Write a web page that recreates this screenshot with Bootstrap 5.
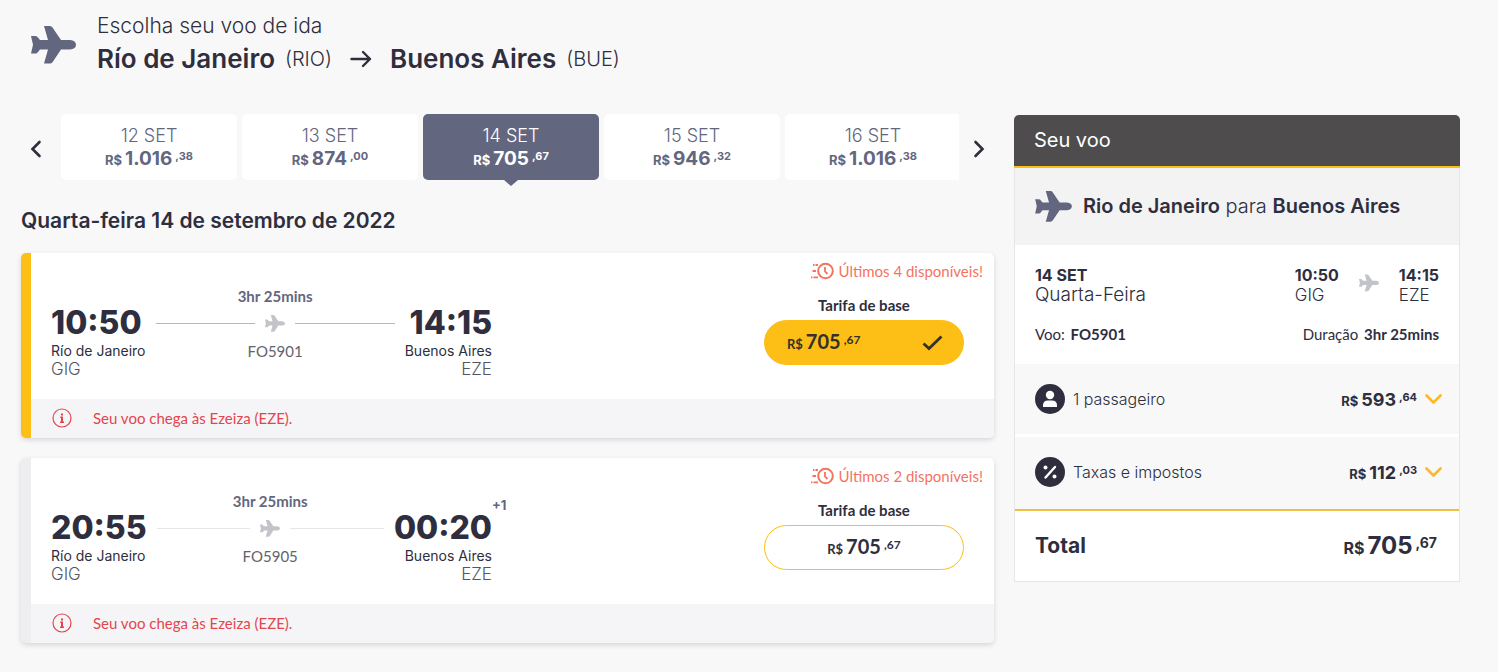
<!DOCTYPE html>
<html lang="pt-BR">
<head>
<meta charset="utf-8">
<meta name="viewport" content="width=device-width, initial-scale=1">
<title>Escolha seu voo de ida</title>
<link href="https://cdn.jsdelivr.net/npm/bootstrap@5.3.0/dist/css/bootstrap.min.css" rel="stylesheet">
<style>
:root { --ink: #2e2e3e; --slate: #63667f; --gold: #fdbe15; --alert: #e4454c; --coral: #f4735f; }
body { background: #f8f8f8; color: var(--ink); font-family: Inter, "Open Sans", sans-serif; }
.page { padding: 14px 38px 28px 21px; }
.lato { font-family: Lato, sans-serif; font-size: 15px; line-height: 20px; }
.light { font-weight: 300; }
.semi { font-weight: 600; }

.top-bar { padding-left: 10px; gap: 21px; margin-bottom: 38px; }
.top-bar h1 { font-size: 21px; line-height: 24px; margin-bottom: 4px; }
.route-line { font-size: 26px; line-height: 34px; gap: 0 10px; }
.route-line .iata { font-size: 20px; }
.plane { color: var(--slate); flex: none; }
.plane-soft { color: #c3c4ca; flex: none; }

.columns { gap: 20px; }
.results { flex: 1 1 0; min-width: 0; }
.sidebar { flex: 0 0 31%; }

.arrow-btn { border: 0; background: none; padding: 0; width: 30px; height: 66px; color: var(--ink); }
.days { gap: 5px; overflow-x: clip; margin: 0 5px 0 10px; flex: 1; min-width: 0; }
.day { flex: 0 0 176px; height: 66px; border: 0; border-radius: 5px; background: #fff; color: var(--slate); padding: 3px 0 0; position: relative; }
.day-name { display: block; font-size: 18px; line-height: 22px; font-weight: 300; }
.day .price { line-height: 24px; display: block; }
.day.active { background: var(--slate); color: #fff; }
.day.active::after { content: ""; position: absolute; left: 50%; top: 100%; margin-left: -7px; border: 7px solid transparent; border-top: 6px solid var(--slate); border-bottom: 0; }

.price { font-weight: 700; font-size: 19px; white-space: nowrap; }
.price small { font-size: 13px; font-weight: 700; margin-right: 3px; }
.price sup { font-size: 11px; font-weight: 700; margin-left: 3px; top: 0; vertical-align: 5px; line-height: 1; }
.price-total { font-size: 24px; }
.price-total small { font-size: 16px; }
.price-total sup { font-size: 14px; vertical-align: 6px; }

.date-title { font-size: 21px; line-height: 26px; font-weight: 600; margin: 28px 0 19px; }

.flight { border-left: 10px solid #eeeef0; border-radius: 5px; background: #fff; box-shadow: 0 2px 5px rgba(46,46,62,.16); margin-bottom: 20px; }
.flight.chosen { border-left-color: var(--gold); }
.flight-body { min-height: 146px; padding-left: 20px; }
.trip { flex: 0 1 441px; padding-top: 33px; }
.stop { padding-top: 17px; }
.hour { font-size: 32px; line-height: 39px; font-weight: 800; position: relative; }
.plus-day { position: absolute; left: 100%; top: -13px; font-size: 13px; line-height: 20px; font-weight: 700; color: var(--slate); }
.city { font-size: 14px; line-height: 18px; }
.code { font-size: 17px; line-height: 18px; font-weight: 300; color: #55565f; }
.leg { margin: 0 10px; }
.leg-line { height: 35px; gap: 10px; }
.leg-line hr { flex: 1; height: 1px; margin: 0; border: 0; background: #e6e6ea; opacity: 1; }
.chosen .leg-line hr { background: #f0b91c; }
.leg-time { color: var(--slate); font-weight: 700; }
.leg-code { color: #63646b; }
.offer { padding: 8px 11px 0 0; }
.scarce { color: var(--coral); margin-bottom: 14px; gap: 5px; }
.fare { width: 200px; margin-right: 19px; }
.fare-btn { height: 45px; width: 100%; margin-top: 5px; border: 1px solid var(--gold); border-radius: 23px; background: #fff; color: var(--ink); }
.fare-btn .price { font-size: 20px; }
.fare-btn sup { font-size: 12px; }
.fare-btn.chosen-fare { background: var(--gold); color: #35302a; padding: 0 20px 0 22px; }
.notice { background: #f5f5f7; color: var(--alert); height: 39px; padding: 0 0 1px 21px; gap: 21px; border-radius: 0 0 5px 0; }

.summary { border: 1px solid #e6e6e8; border-top: 0; border-radius: 5px 5px 0 0; background: #fff; margin-top: 1px; }
.summary-head { background: #4e4c4d; color: #fff; border-bottom: 2px solid var(--gold); border-radius: 5px 5px 0 0; margin: 0 -1px; padding: 12px 20px; font-size: 20px; line-height: 27px; font-weight: 400; }
.summary-route { background: #f3f3f4; height: 77px; padding: 0 20px 1px; gap: 11px; font-size: 20px; }
.summary-info { padding: 20px 20px 20px; font-size: 16px; line-height: 20px; }
.summary-info .iata { font-size: 17px; }
.summary-info .weekday { font-size: 19px; }
.summary-info b { margin-left: 2px; }
.times { margin-bottom: 19px; }
.to-plane { margin: 9px 20px 0; }
.cost { border: 0; background: #f8f8f8; color: var(--ink); height: 70px; padding: 0 17px 0 20px; margin-bottom: 3px; font-size: 16px; }
.cost + .cost { height: 72px; margin-bottom: 0; padding-bottom: 2px; }
.cost .price { font-size: 18px; }
.total { border-top: 2px solid #ecc040; height: 72px; padding: 0 22px 0 20px; }
.total-label { font-size: 21px; font-weight: 700; }
@media (max-width: 1100px) { .columns { flex-direction: column; } .results, .sidebar { flex: none; width: 100%; } }
</style>
</head>
<body>
<svg class="d-none" xmlns="http://www.w3.org/2000/svg">
  <symbol id="plane" viewBox="0 0 45 38"><path fill="currentColor" d="M0 10H4.5Q6 10 7 11.5L9 14H17L13 0H19Q20.500 0 21.500 1.500L30 14H39Q45 14.500 45 18.800Q45 23 39 23.600H30L21.500 36.200Q20.500 37.600 19 37.600H13L17 23.600H9L7 26.100Q6 27.600 4.500 27.600H0L2 18.800Z"/></symbol>
  <symbol id="info" viewBox="0 0 20 20"><circle cx="10" cy="10" r="9" fill="none" stroke="currentColor" stroke-width="1.200"/><path fill="currentColor" d="M9 5.500h2v2H9zM8.300 8.500H11v5h1V15H8v-1.500h1V10h-.7z"/></symbol>
  <symbol id="rush" viewBox="0 0 23 18"><g fill="none" stroke="currentColor" stroke-width="2"><circle cx="14.500" cy="9" r="7.300"/><path stroke-width="1.800" d="M14 5v4.500l2.500 2.500M2 3H3.500M4.500 3H7M1.500 9H5M0 15.300H1.500M2.500 15.300H7" /></g></symbol>
  <symbol id="down" viewBox="0 0 17 11"><path d="M1.500 1.500L8.500 8.500L15.500 1.500" fill="none" stroke="#fbb829" stroke-width="2.600" stroke-linecap="round" stroke-linejoin="round"/></symbol>
</svg>

<div class="container-fluid page">
  <header class="top-bar d-flex align-items-center">
    <svg class="plane" width="45" height="38"><use href="#plane"/></svg>
    <div>
      <h1 class="light">Escolha seu voo de ida</h1>
      <div class="route-line d-flex flex-wrap align-items-center">
        <span class="semi">Río de Janeiro</span><span class="iata light">(RIO)</span>
        <svg class="mx-2" width="22" height="18" viewBox="0 0 22 18" fill="none" stroke="currentColor" stroke-width="2.400" stroke-linecap="round" stroke-linejoin="round"><path d="M1.500 9H20M13 2L20 9L13 16"/></svg>
        <span class="semi">Buenos Aires</span><span class="iata light">(BUE)</span>
      </div>
    </div>
  </header>

  <div class="columns d-flex align-items-start">
    <main class="results">
      <nav class="d-flex" aria-label="Datas">
        <button type="button" class="arrow-btn" aria-label="Datas anteriores"><svg width="12" height="18" viewBox="0 0 12 18"><path d="M9.500 2L2.500 9L9.500 16" fill="none" stroke="currentColor" stroke-width="2.600" stroke-linecap="round"/></svg></button>
        <div class="days d-flex">
          <button type="button" class="day"><span class="day-name">12 SET</span><span class="price"><small>R$</small>1.016<sup>,38</sup></span></button>
          <button type="button" class="day"><span class="day-name">13 SET</span><span class="price"><small>R$</small>874<sup>,00</sup></span></button>
          <button type="button" class="day active" aria-current="date"><span class="day-name">14 SET</span><span class="price"><small>R$</small>705<sup>,67</sup></span></button>
          <button type="button" class="day"><span class="day-name">15 SET</span><span class="price"><small>R$</small>946<sup>,32</sup></span></button>
          <button type="button" class="day"><span class="day-name">16 SET</span><span class="price"><small>R$</small>1.016<sup>,38</sup></span></button>
        </div>
        <button type="button" class="arrow-btn" aria-label="Próximas datas"><svg width="12" height="18" viewBox="0 0 12 18"><path d="M2.500 2L9.500 9L2.500 16" fill="none" stroke="currentColor" stroke-width="2.600" stroke-linecap="round"/></svg></button>
      </nav>

      <h2 class="date-title">Quarta-feira 14 de setembro de 2022</h2>

      <article class="flight chosen">
        <div class="flight-body d-flex justify-content-between">
          <div class="trip d-flex">
            <div class="stop"><div class="hour">10:50</div><div class="city">Río de Janeiro</div><div class="code">GIG</div></div>
            <div class="leg lato flex-fill text-center">
              <div class="leg-time">3hr 25mins</div>
              <div class="leg-line d-flex align-items-center"><hr><svg class="plane-soft" width="20" height="17"><use href="#plane"/></svg><hr></div>
              <div class="leg-code">FO5901</div>
            </div>
            <div class="stop d-flex flex-column align-items-end"><div class="hour">14:15</div><div class="city">Buenos Aires</div><div class="code">EZE</div></div>
          </div>
          <div class="offer d-flex flex-column align-items-end">
            <div class="scarce lato d-flex align-items-center"><svg width="23" height="18"><use href="#rush"/></svg>Últimos 4 disponíveis!</div>
            <div class="fare lato text-center"><div class="fw-bold">Tarifa de base</div>
              <button type="button" class="fare-btn chosen-fare d-flex align-items-center justify-content-between" aria-pressed="true">
                <span class="price"><small>R$</small>705<sup>,67</sup></span>
                <svg width="21" height="16" viewBox="0 0 21 16"><path d="M1.500 8.500L7 13.500L19.500 1.500" fill="none" stroke="currentColor" stroke-width="2.800"/></svg>
              </button>
            </div>
          </div>
        </div>
        <div class="notice lato d-flex align-items-center"><svg width="20" height="20"><use href="#info"/></svg>Seu voo chega às Ezeiza (EZE).</div>
      </article>

      <article class="flight mb-0">
        <div class="flight-body d-flex justify-content-between">
          <div class="trip d-flex">
            <div class="stop"><div class="hour">20:55</div><div class="city">Río de Janeiro</div><div class="code">GIG</div></div>
            <div class="leg lato flex-fill text-center">
              <div class="leg-time">3hr 25mins</div>
              <div class="leg-line d-flex align-items-center"><hr><svg class="plane-soft" width="20" height="17"><use href="#plane"/></svg><hr></div>
              <div class="leg-code">FO5905</div>
            </div>
            <div class="stop d-flex flex-column align-items-end"><div class="hour">00:20<span class="plus-day">+1</span></div><div class="city">Buenos Aires</div><div class="code">EZE</div></div>
          </div>
          <div class="offer d-flex flex-column align-items-end">
            <div class="scarce lato d-flex align-items-center"><svg width="23" height="18"><use href="#rush"/></svg>Últimos 2 disponíveis!</div>
            <div class="fare lato text-center"><div class="fw-bold">Tarifa de base</div>
              <button type="button" class="fare-btn" aria-pressed="false"><span class="price"><small>R$</small>705<sup>,67</sup></span></button>
            </div>
          </div>
        </div>
        <div class="notice lato d-flex align-items-center"><svg width="20" height="20"><use href="#info"/></svg>Seu voo chega às Ezeiza (EZE).</div>
      </article>
    </main>

    <aside class="sidebar">
      <div class="summary">
        <h2 class="summary-head">Seu voo</h2>
        <div class="summary-route d-flex align-items-center">
          <svg class="plane" width="37" height="31"><use href="#plane"/></svg>
          <div><span class="semi">Rio de Janeiro</span> <span class="light">para</span> <span class="semi">Buenos Aires</span></div>
        </div>
        <div class="summary-info">
          <div class="times d-flex justify-content-between">
            <div><div class="fw-bold">14 SET</div><div class="weekday light">Quarta-Feira</div></div>
            <div class="d-flex">
              <div><div class="fw-bold">10:50</div><div class="iata light">GIG</div></div>
              <svg class="plane-soft to-plane" width="20" height="18"><use href="#plane"/></svg>
              <div><div class="fw-bold">14:15</div><div class="iata light">EZE</div></div>
            </div>
          </div>
          <div class="lato d-flex justify-content-between"><span>Voo: <b>FO5901</b></span><span>Duração <b>3hr 25mins</b></span></div>
        </div>
        <button type="button" class="cost w-100 d-flex align-items-center" aria-expanded="false">
          <svg width="30" height="30" viewBox="0 0 30 30"><circle cx="15" cy="15" r="15" fill="#2e2e3e"/><circle cx="15" cy="11" r="4.200" fill="#fff"/><path fill="#fff" d="M8 23V21.500Q8 16.500 13 16.500H17Q22 16.500 22 21.500V23Z"/></svg>
          <span class="light ms-2">1 passageiro</span>
          <span class="price ms-auto me-2"><small>R$</small>593<sup>,64</sup></span>
          <svg width="17" height="11"><use href="#down"/></svg>
        </button>
        <button type="button" class="cost w-100 d-flex align-items-center" aria-expanded="false">
          <svg width="30" height="30" viewBox="0 0 30 30"><circle cx="15" cy="15" r="15" fill="#2e2e3e"/><path d="M10.500 20.500L20 10" stroke="#fff" stroke-width="2.400" stroke-linecap="round"/><circle cx="10.500" cy="10.500" r="2" fill="#fff"/><circle cx="19.500" cy="19.500" r="2" fill="#fff"/></svg>
          <span class="light ms-2">Taxas e impostos</span>
          <span class="price ms-auto me-2"><small>R$</small>112<sup>,03</sup></span>
          <svg width="17" height="11"><use href="#down"/></svg>
        </button>
        <div class="total d-flex align-items-center justify-content-between">
          <span class="total-label">Total</span>
          <span class="price price-total"><small>R$</small>705<sup>,67</sup></span>
        </div>
      </div>
    </aside>
  </div>
</div>
<script src="https://cdn.jsdelivr.net/npm/bootstrap@5.3.0/dist/js/bootstrap.bundle.min.js"></script>
</body>
</html>
